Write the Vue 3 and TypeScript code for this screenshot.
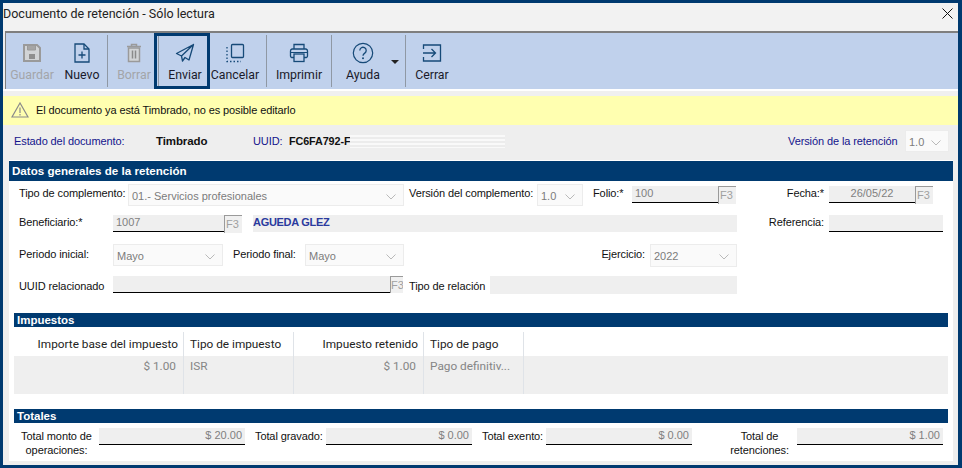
<script setup lang="ts">
interface Col { title: string; cls: string }
const cols: Col[] = [
  { title: 'Importe base del impuesto', cls: 'c1 num' },
  { title: 'Tipo de impuesto', cls: 'c2' },
  { title: 'Impuesto retenido', cls: 'c3 num' },
  { title: 'Tipo de pago', cls: 'c4' },
]
const row: string[] = ['$ 1.00', 'ISR', '$ 1.00', 'Pago definitiv...']
</script>

<template>
  <div class="win">
    <div class="title">
      <span>Documento de retención - Sólo lectura</span>
      <svg class="x" width="11" height="11" viewBox="0 0 11 11"><path d="M.5.5l10 10M10.500.5l-10 10" stroke="#111" fill="none"/></svg>
    </div>

    <div class="toolbar">
      <div class="btn b-save dis">
        <svg width="20" height="20" viewBox="0 0 20 20"><path d="M2 2h13l3 3v13H2z" fill="#d2d4d6" stroke="#9a9a9a" stroke-width="2"/><path d="M5.500 3v4h8V3" fill="#a5a5a5" stroke="#9a9a9a"/><rect x="7" y="11" width="6" height="5" fill="#8f8f8f"/></svg>
        <span>Guardar</span>
      </div>
      <div class="btn b-new">
        <svg width="20" height="20" viewBox="0 0 20 20"><path d="M3 1h9l5 5v13H3z" fill="none" stroke="#164a78" stroke-width="1.300"/><path d="M12 1v5h5" fill="none" stroke="#164a78" stroke-width="1.300"/><path d="M10 8.500v7M6.500 12h7" stroke="#164a78" stroke-width="1.300"/></svg>
        <span>Nuevo</span>
      </div>
      <i class="sep"></i>
      <div class="btn b-del dis">
        <svg width="20" height="20" viewBox="0 0 20 20"><path d="M3 3.500h14M7.500 3V1.500h5V3" fill="none" stroke="#9a9a9a" stroke-width="1.500"/><path d="M4.500 5h11v13.500h-11z" fill="#d2d4d6" stroke="#9a9a9a" stroke-width="1.500"/><path d="M8.500 7.500v8M11.500 7.500v8" stroke="#8a8a8a" stroke-width="1.500"/></svg>
        <span>Borrar</span>
      </div>
      <div class="btn b-send">
        <svg width="20" height="20" viewBox="0 0 20 20"><path d="M18.500 1.500L1.500 10.500l5 2.500zM18.500 1.500L6.500 13l1 5 2.500-3.500 4 2.500z" fill="none" stroke="#164a78" stroke-width="1.300" stroke-linejoin="round"/></svg>
        <span>Enviar</span>
      </div>
      <div class="btn b-cancel">
        <svg width="20" height="20" viewBox="0 0 20 20"><rect x="6.500" y="1.500" width="12" height="13" rx="1" fill="none" stroke="#164a78" stroke-width="1.300"/><path d="M2 4v14.500h14" fill="none" stroke="#164a78" stroke-width="1.300" stroke-dasharray="1.500 2"/></svg>
        <span>Cancelar</span>
      </div>
      <i class="sep"></i>
      <div class="btn b-print">
        <svg width="20" height="20" viewBox="0 0 20 20"><path d="M5 6V1.500h10V6" fill="none" stroke="#164a78" stroke-width="1.300"/><path d="M5 14.500H2.500a1.500 1.500 0 0 1-1-1.500V8a2 2 0 0 1 1.500-2h14a2 2 0 0 1 1.500 2v5a1.500 1.500 0 0 1-1 1.500H15" fill="none" stroke="#164a78" stroke-width="1.300"/><rect x="5" y="11" width="10" height="7.500" fill="none" stroke="#164a78" stroke-width="1.300"/><path d="M1.500 9.500h17" stroke="#164a78"/></svg>
        <span>Imprimir</span>
      </div>
      <i class="sep"></i>
      <div class="btn b-help">
        <svg width="22" height="22" viewBox="0 0 22 22"><circle cx="11" cy="11" r="9.700" fill="none" stroke="#164a78" stroke-width="1.200"/><path d="M7.800 8.500a3.200 3.200 0 1 1 5 2.600c-1.200.8-1.800 1.300-1.800 2.700" fill="none" stroke="#164a78" stroke-width="1.300"/><circle cx="11" cy="16.300" r="1" fill="#164a78"/></svg>
        <span>Ayuda</span>
        <b class="caret"></b>
      </div>
      <i class="sep"></i>
      <div class="btn b-close">
        <svg width="20" height="20" viewBox="0 0 20 20"><path d="M1.500 6V2h17v16h-17v-4" fill="none" stroke="#164a78" stroke-width="1.300"/><path d="M1 10h12M9.500 6l4 4-4 4" fill="none" stroke="#164a78" stroke-width="1.300"/></svg>
        <span>Cerrar</span>
      </div>
    </div>

    <div class="gap"></div>

    <div class="notice">
      <svg width="18" height="16" viewBox="0 0 18 16"><path d="M9 1L1 15h16z" fill="none" stroke="#8a8a8a" stroke-width="1.200"/><path d="M9 5.500v5.500M9 12v1.500" stroke="#8a8a8a" stroke-width="1.200"/></svg>
      <span>El documento ya está Timbrado, no es posible editarlo</span>
    </div>

    <div class="status">
      <span class="blue s-estado">Estado del documento:</span>
      <strong class="s-timb">Timbrado</strong>
      <span class="blue s-uuid">UUID:</span>
      <strong class="s-code">FC6FA792-F</strong>
      <span class="blur"></span>
      <span class="blue s-ver">Versión de la retención</span>
      <span class="sel w44"><em>1.0</em><svg class="chev" width="10" height="6" viewBox="0 0 10 6"><path d="M.5.500L5 5 9.500.5" fill="none" stroke="#b9b9b9"/></svg></span>
    </div>

    <div class="panel">
      <div class="head h-main">Datos generales de la retención</div>

      <div class="form">
        <div class="r r1">
          <label class="w109">Tipo de complemento:</label>
          <span class="sel w276"><em>01.- Servicios profesionales</em><svg class="chev" width="10" height="6" viewBox="0 0 10 6"><path d="M.5.500L5 5 9.500.5" fill="none" stroke="#b9b9b9"/></svg></span>
          <label class="w128 ml5">Versión del complemento:</label>
          <span class="sel w46"><em>1.0</em><svg class="chev" width="10" height="6" viewBox="0 0 10 6"><path d="M.5.500L5 5 9.500.5" fill="none" stroke="#b9b9b9"/></svg></span>
          <label class="w39 ml10">Folio:*</label>
          <span class="inp w86">100</span><span class="f3">F3</span>
          <label class="w93 right">Fecha:*</label>
          <span class="inp w86 center">26/05/22</span><span class="f3">F3</span>
        </div>

        <div class="r r2">
          <label class="w94">Beneficiario:*</label>
          <span class="inp w111">1007</span><span class="f3">F3</span>
          <strong class="name">AGUEDA GLEZ</strong>
          <label class="w92 right">Referencia:</label>
          <span class="inp w114"></span>
        </div>

        <div class="r r3">
          <label class="w94">Periodo inicial:</label>
          <span class="sel w110"><em>Mayo</em><svg class="chev" width="10" height="6" viewBox="0 0 10 6"><path d="M.5.500L5 5 9.500.5" fill="none" stroke="#b9b9b9"/></svg></span>
          <label class="w72 ml10">Periodo final:</label>
          <span class="sel w99"><em>Mayo</em><svg class="chev" width="10" height="6" viewBox="0 0 10 6"><path d="M.5.500L5 5 9.500.5" fill="none" stroke="#b9b9b9"/></svg></span>
          <label class="w246 right">Ejercicio:</label>
          <span class="sel w87"><em>2022</em><svg class="chev" width="10" height="6" viewBox="0 0 10 6"><path d="M.5.500L5 5 9.500.5" fill="none" stroke="#b9b9b9"/></svg></span>
        </div>

        <div class="r r4">
          <label class="w94">UUID relacionado</label>
          <span class="inp w277"></span><span class="f3 f3s">F3</span>
          <label class="w81 ml6">Tipo de relación</label>
          <span class="plain"></span>
        </div>
      </div>

      <div class="head h-sub">Impuestos</div>
      <div class="table">
        <div class="tr th">
          <div v-for="c in cols" :key="c.title" class="cell" :class="c.cls">{{ c.title }}</div>
        </div>
        <div class="tr td">
          <div v-for="(v, i) in row" :key="i" class="cell" :class="cols[i].cls">{{ v }}</div>
        </div>
        <div class="tr te">
          <div v-for="c in cols" :key="c.title" class="cell" :class="c.cls"></div>
        </div>
      </div>

      <div class="head h-tot">Totales</div>
      <div class="totals">
        <label class="t1">Total monto de<br>operaciones:</label>
        <span class="inp tv w146">$ 20.00</span>
        <label class="t2">Total gravado:</label>
        <span class="inp tv w146">$ 0.00</span>
        <label class="t3">Total exento:</label>
        <span class="inp tv w146">$ 0.00</span>
        <label class="t4">Total de<br>retenciones:</label>
        <span class="inp tv w146">$ 1.00</span>
      </div>
    </div>
  </div>
</template>

<style scoped>
.win {
  width: 962px;
  height: 468px;
  box-sizing: border-box;
  border: solid #003a70;
  border-width: 3px 4px 3px 3px;
  background: #eeeeee;
  font-family: "Liberation Sans", Arial, sans-serif;
  font-size: 11px;
  letter-spacing: -.1px;
  color: #111;
  overflow: hidden;
  display: flex;
  flex-direction: column;
}
.title {
  height: 28px;
  flex: none;
  background: #f2f2f2;
  display: flex;
  justify-content: space-between;
  align-items: flex-start;
  font-family: Roboto, sans-serif;
  font-size: 12.500px;
  letter-spacing: 0;
  line-height: 22px;
  color: #222;
}
.x { margin: 5px 5px 0 0; }
.toolbar {
  flex: none;
  height: 58px;
  box-sizing: border-box;
  margin: 0 0 0 2px;
  background: #c0d1ec;
  border-top: 2px solid #7f7f7f;
  border-left: 1px solid #7f7f7f;
  display: flex;
  padding-left: 4px;
  font-family: Roboto, sans-serif;
  font-size: 12.300px;
  letter-spacing: 0;
}
.btn {
  position: relative;
  box-sizing: border-box;
  height: 56px;
  display: flex;
  flex-direction: column;
  align-items: center;
  padding-top: 10px;
  color: #1a1a2a;
  line-height: 17px;
}
.btn svg { height: 20px; flex: none; display: block; }
.btn span { margin-top: 4px; white-space: nowrap; }
.dis { color: #a3a5a9; }
.sep {
  width: 1px;
  flex: none;
  height: 52px;
  margin-top: 2px;
  background: #8f98a4;
}
.b-save { width: 44px; }
.b-new { width: 53px; padding-left: 3px; }
.b-del { width: 46px; padding-left: 6px; }
.b-send {
  width: 56px;
  border: 3px solid #003a70;
  padding: 7px 0 0 6px;
}
.b-send::before {
  content: "";
  position: absolute;
  left: 1px;
  top: 0;
  bottom: 0;
  width: 1px;
  background: #8f98a4;
}
.b-cancel { width: 56px; padding-right: 6px; }
.b-print { width: 64px; }
.b-help { width: 73px; padding: 9px 11px 0 0; }
.b-help svg { height: 22px; }
.b-help span { margin-top: 3px; }
.b-close { width: 52px; }
.caret {
  position: absolute;
  left: 59px;
  top: 27px;
  border: 4px solid transparent;
  border-top-color: #222;
  border-bottom: 0;
}
.gap {
  flex: none;
  height: 7px;
  background: linear-gradient(#fff 2px, #f0f0f0 2px);
}
.notice {
  flex: none;
  height: 29px;
  box-sizing: border-box;
  background: #ffffb0;
  display: flex;
  align-items: center;
  gap: 7px;
  padding: 0 0 1px 8px;
}
.status {
  flex: none;
  height: 35px;
  display: flex;
  align-items: center;
  box-sizing: border-box;
  padding: 0 0 3px 11px;
}
.blue { color: #14148c; }
.status strong { font-weight: 700; }
.s-estado { width: 142px; white-space: nowrap; }
.s-timb { width: 97px; font-size: 11.500px; }
.s-uuid { width: 36px; }
.s-code { width: 61px; white-space: nowrap; font-size: 10.800px; overflow: hidden; }
.blur {
  width: 155px;
  height: 13px;
  background: repeating-linear-gradient(#f9f9f9 0 2px, #ececec 2px 4px);
  filter: blur(.6px);
}
.s-ver { margin-left: 283px; width: 117px; white-space: nowrap; }
.sel {
  position: relative;
  display: flex;
  align-items: center;
  box-sizing: border-box;
  height: 22px;
  background: #fafafa;
  border: 1px solid #ececec;
  padding: 1px 0 0 3px;
  color: #7c7c7c;
  flex: none;
  letter-spacing: 0;
}
.sel em { font-style: normal; white-space: nowrap; }
.chev { position: absolute; right: 7px; top: 9px; }
.w44 { width: 44px; }
.panel {
  margin-left: 6px;
  width: 944px;
  height: 301px;
  background: #fff;
  flex: none;
  padding-top: 1px;
  box-sizing: border-box;
}
.head {
  background: #003a70;
  color: #fff;
  font-weight: 700;
  box-sizing: border-box;
  font-size: 11.500px;
  letter-spacing: 0;
}
.h-main { height: 20px; line-height: 19px; padding-left: 3px; font-size: 11.600px; }
.h-sub, .h-tot {
  margin: 0 5px;
  height: 14px;
  line-height: 14px;
  padding-left: 3px;
}
.form { padding: 3px 0 0 10px; height: 132px; box-sizing: border-box; }
.r { display: flex; align-items: flex-start; }
.r label { flex: none; white-space: nowrap; line-height: 16px; }
.r1 { height: 31px; }
.r2 { height: 29px; }
.r3 { height: 32px; }
.r1 label { margin-top: 1px; }
.r2 label { margin-top: -1px; }
.r3 label { margin-top: 2px; }
.r4 label { margin-top: 2px; }
.inp {
  flex: none;
  box-sizing: border-box;
  height: 17px;
  background: #efefef;
  border-bottom: 1px solid #000;
  color: #7f7f7f;
  padding-left: 3px;
  line-height: 15px;
  white-space: nowrap;
  letter-spacing: 0;
}
.r1 .inp, .r1 .f3 { margin-top: 2px; }
.center { text-align: center; padding: 0; }
.f3 {
  flex: none;
  box-sizing: border-box;
  width: 18px;
  height: 18px;
  background: #f0f0f0;
  border-top: 1px solid #9a9a9a;
  border-left: 1px solid #9a9a9a;
  color: #a0a0a0;
  font-size: 11px;
  letter-spacing: 0;
  line-height: 17px;
  padding-left: 1px;
}
.f3s { width: 13px; height: 17px; overflow: hidden; padding: 0; }
.name {
  flex: none;
  width: 484px;
  height: 17px;
  line-height: 15px;
  margin-left: 11px;
  background: #efefef;
  color: #2a3a9e;
  font-weight: 700;
  letter-spacing: -.3px;
}
.plain { flex: none; width: 247px; height: 18px; background: #efefef; }
.right { text-align: right; padding-right: 5px; box-sizing: border-box; }
.ml5 { margin-left: 5px; }
.ml6 { margin-left: 6px; }
.ml10 { margin-left: 10px; }
.w39 { width: 39px; }
.w46 { width: 46px; }
.w72 { width: 72px; }
.w81 { width: 81px; }
.w86 { width: 86px; }
.w87 { width: 87px; }
.w92 { width: 92px; }
.w93 { width: 93px; }
.w94 { width: 94px; }
.w99 { width: 99px; }
.w109 { width: 109px; }
.w110 { width: 110px; }
.w111 { width: 111px; }
.w114 { width: 114px; }
.w128 { width: 128px; }
.w146 { width: 146px; }
.w246 { width: 246px; }
.w276 { width: 276px; }
.w277 { width: 277px; }
.r3 .w87 { height: 23px; }
.table { margin: 5px 5px 15px; font-family: Roboto, sans-serif; font-size: 11.800px; letter-spacing: 0; }
.tr { display: flex; }
.th { height: 24px; color: #222; }
.th .cell { line-height: 25px; }
.td { height: 19px; background: #efefef; color: #858585; }
.td .num { padding-right: 7px; }
.te { height: 19px; background: #efefef; }
.cell {
  box-sizing: border-box;
  border-right: 1px solid #dfe3e8;
  padding: 0 5px 0 6px;
  line-height: 21px;
  white-space: nowrap;
  flex: none;
}
.num { text-align: right; }
.c1 { width: 170px; }
.c2 { width: 110px; }
.c3 { width: 130px; }
.c4 { width: 100px; }
.totals {
  display: flex;
  align-items: flex-start;
  padding: 5px 0 0 10px;
  line-height: 14px;
}
.totals label { text-align: center; white-space: nowrap; flex: none; padding-top: 1px; }
.t1 { width: 80px; padding-right: 5px; box-sizing: border-box; }
.t2 { width: 71px; margin-left: 10px; text-align: left !important; }
.t3 { width: 64px; margin-left: 10px; text-align: left !important; }
.t4 { width: 105px; padding-left: 30px; box-sizing: border-box; }
.tv { text-align: right; padding: 0 3px 0 0; }
</style>
